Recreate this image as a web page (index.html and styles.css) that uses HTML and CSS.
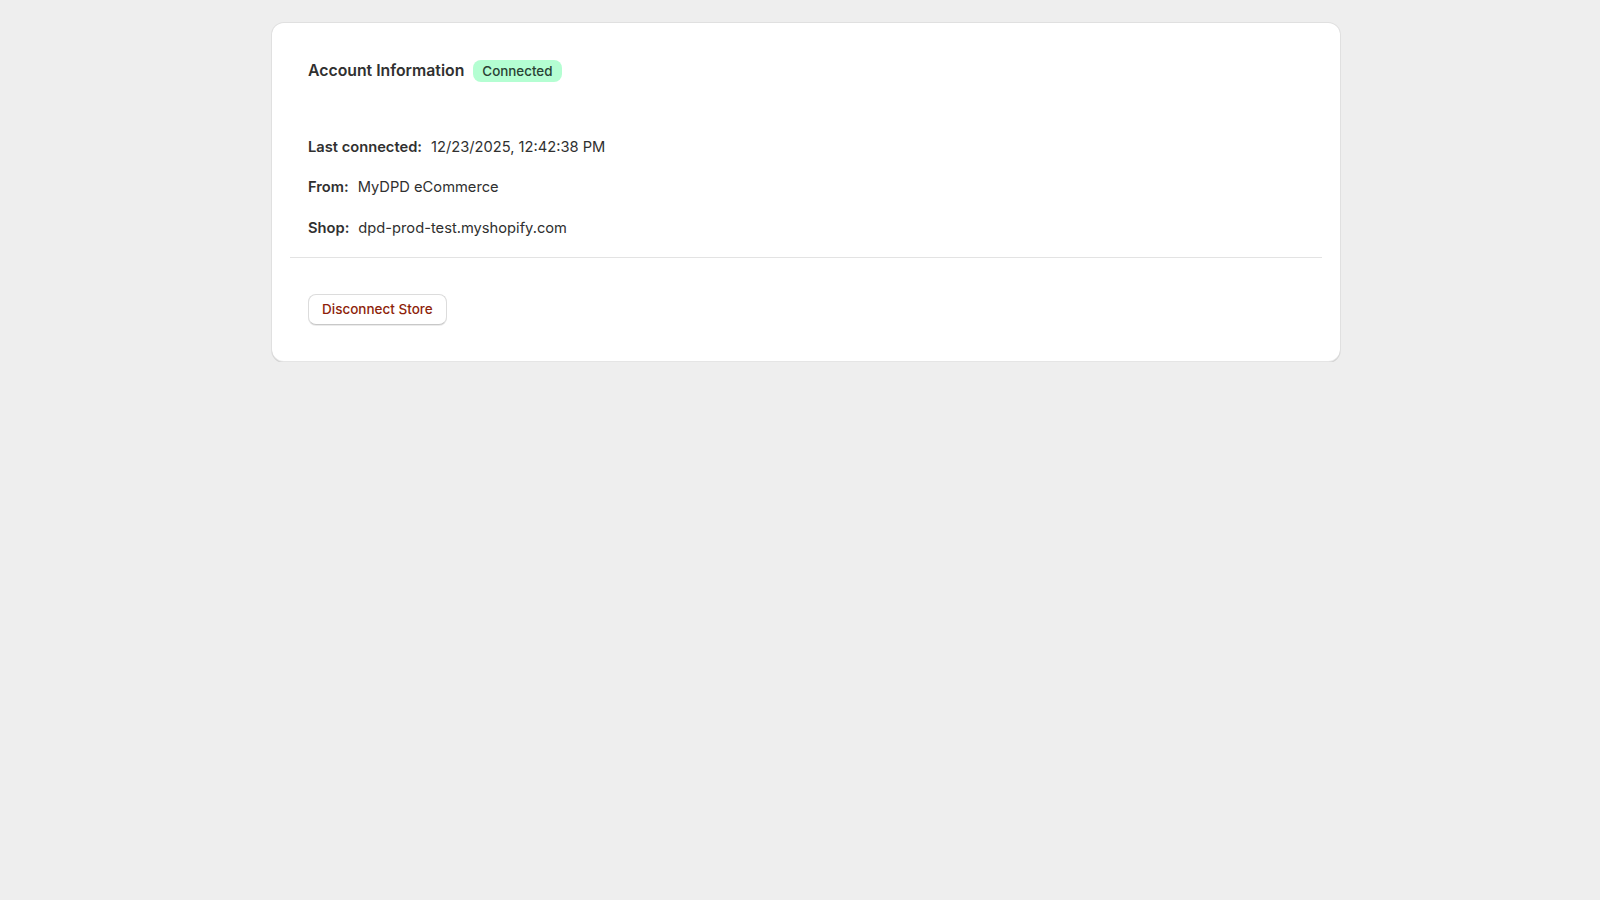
FILE: index.html
```html
<!DOCTYPE html>
<html lang="en">
<head>
<meta charset="utf-8">
<title>Account Information</title>
<link rel="stylesheet" href="styles.css">
</head>
<body>
<main class="page">
  <section class="card">
    <div class="card-section">
      <div class="header">
        <h2 class="title">Account Information</h2>
        <span class="badge">Connected</span>
      </div>
      <div class="rows">
        <div class="row"><span class="label">Last connected:</span><span class="value">12/23/2025, 12:42:38 PM</span></div>
        <div class="row"><span class="label">From:</span><span class="value">MyDPD eCommerce</span></div>
        <div class="row"><span class="label">Shop:</span><span class="value">dpd-prod-test.myshopify.com</span></div>
      </div>
    </div>
    <hr class="divider">
    <div class="card-section footer">
      <button class="btn-critical" type="button">Disconnect Store</button>
    </div>
  </section>
</main>
</body>
</html>
```

FILE: styles.css
```css
html, body {
  margin: 0;
  padding: 0;
  background: #eeeeee;
  font-family: Inter, "Noto Sans", "Liberation Sans", sans-serif;
  color: #303030;
  -webkit-font-smoothing: antialiased;
}

.page {
  padding: 23px 0 0 272px;
}

.card {
  width: 1068px;
  box-sizing: border-box;
  background: #ffffff;
  border-radius: 12px;
  padding: 18px 18px 20px 18px;
  box-shadow: 0 1px 0 0 rgba(26, 26, 26, 0.07), 0 0 0 1px rgba(0, 0, 0, 0.06), inset 0 -1px 0 0 rgba(0, 0, 0, 0.1);
}

.card-section {
  padding: 18px 18px 0 18px;
}

.header {
  display: flex;
  align-items: center;
  gap: 9px;
  height: 22px;
  padding-top: 1px;
}

.title {
  margin: 0;
  font-size: 15.8px;
  font-weight: 600;
  line-height: 22px;
  color: #303030;
}

.badge {
  display: inline-flex;
  align-items: center;
  height: 22px;
  padding: 0 9px;
  border-radius: 8px;
  background: #b4fed2;
  color: #2a4234;
  font-size: 13.4px;
  font-weight: 450;
}

.rows {
  display: flex;
  flex-direction: column;
  gap: 20px;
  margin-top: 55px;
}

.row {
  display: flex;
  gap: 9px;
  font-size: 14.7px;
  line-height: 20px;
}

.row + .row {
  margin-top: 0.4px;
}

.label {
  font-weight: 600;
  color: #303030;
}

.value {
  color: #303030;
}

.divider {
  margin: 19px 0 0 0;
  border: 0;
  border-top: 1px solid #e3e3e3;
  height: 0;
}

.footer {
  padding-top: 36px;
  padding-bottom: 17px;
}

.btn-critical {
  font-family: inherit;
  font-size: 13.5px;
  font-weight: 550;
  color: #8e1f0b;
  background: #ffffff;
  border: 1px solid #dcdcdc;
  border-bottom-color: #c8c8c8;
  border-radius: 8px;
  height: 31px;
  padding: 0 13px;
  box-shadow: 0 1px 0 0 rgba(0, 0, 0, 0.08);
  cursor: pointer;
}
```
